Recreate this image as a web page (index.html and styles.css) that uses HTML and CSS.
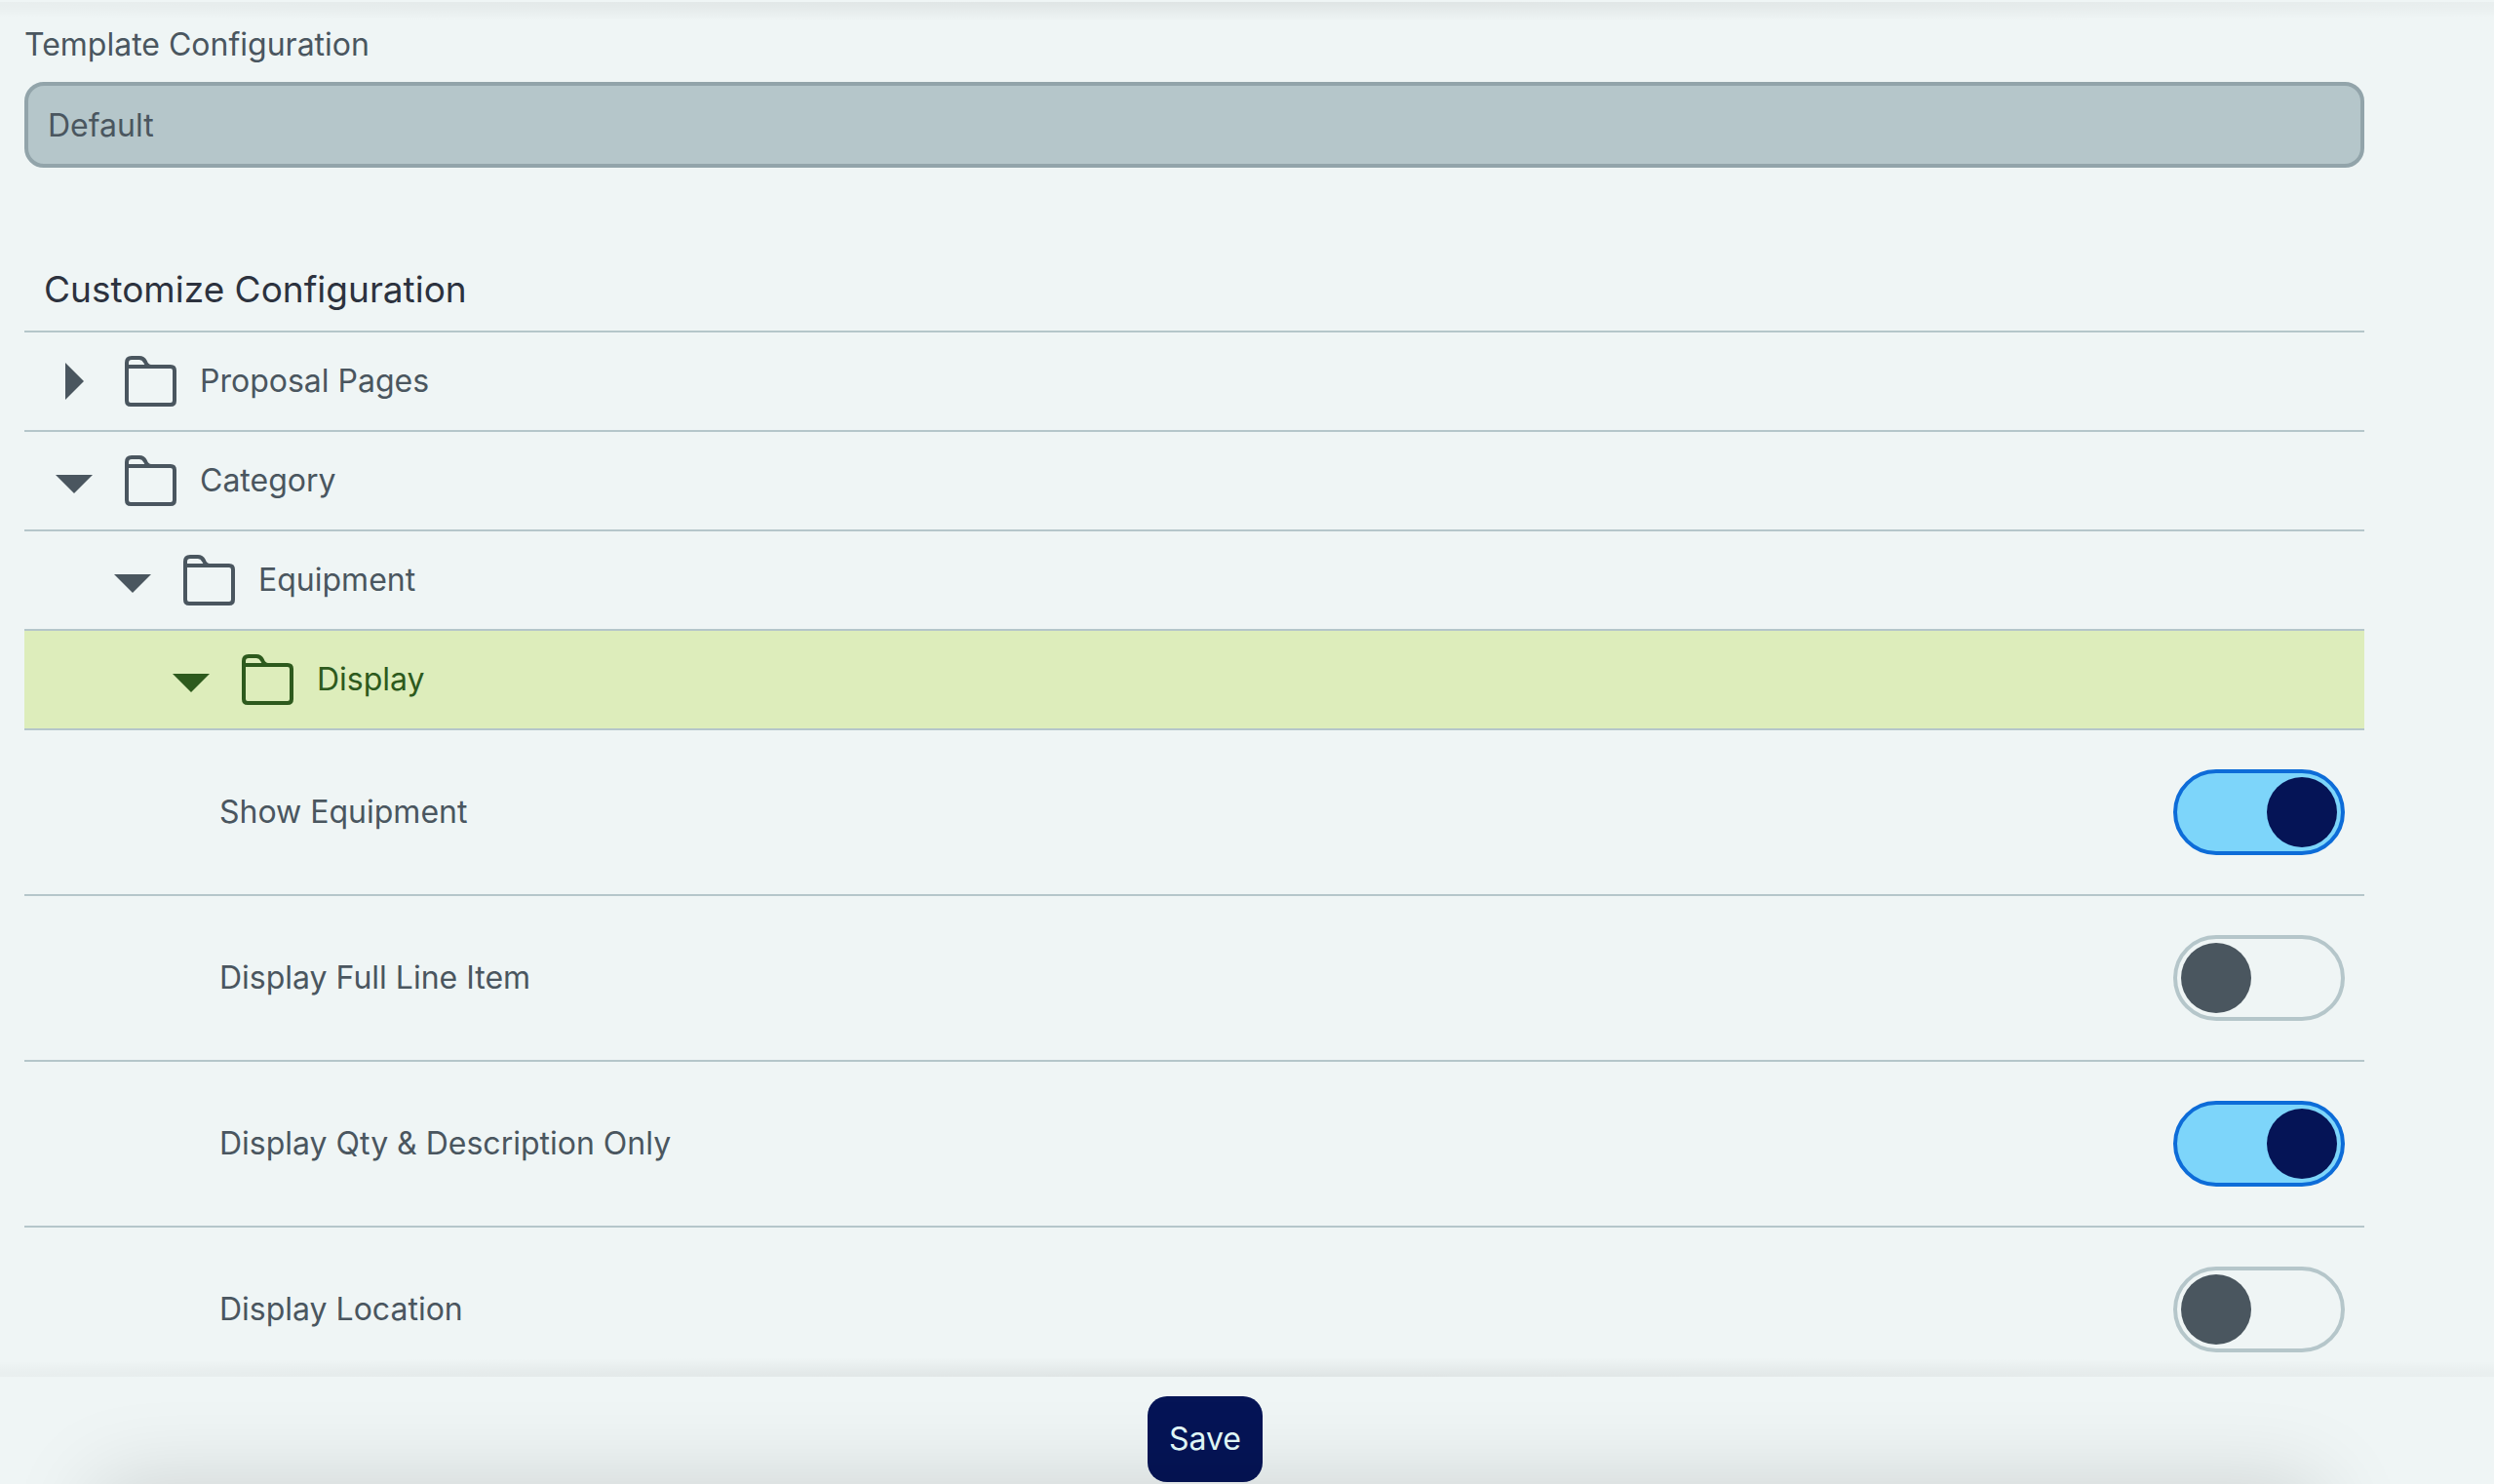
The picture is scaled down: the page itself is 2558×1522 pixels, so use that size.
FILE: index.html
```html
<!DOCTYPE html>
<html lang="en">
<head>
    <meta charset="UTF-8">
    <meta name="viewport" content="width=device-width, initial-scale=1.0">
    <title>Template Configuration</title>
    <link rel="stylesheet" href="styles.css">
</head>
<body>
<svg class="sprite" aria-hidden="true">
    <symbol id="folder" viewBox="0 0 54 54">
        <path d="M3 12V8Q3 3 8 3H16Q20 3 22 7Q24 12 28 12H48Q52 12 52 16V47Q52 51 48 51H7Q3 51 3 47V12H28"/>
    </symbol>
</svg>
<form class="page" id="configForm">
    <main class="content">
        <div class="form-group">
            <label for="template">Template Configuration</label>
            <input class="field" type="text" id="template" name="template" value="Default" disabled>
        </div>
        <h2>Customize Configuration</h2>
        <div class="tree">
            <button class="node" type="button" aria-expanded="false">
                <span class="arrow"></span>
                <svg class="folder"><use href="#folder"/></svg>
                <span>Proposal Pages</span>
            </button>
            <button class="node" type="button" aria-expanded="true">
                <span class="arrow open"></span>
                <svg class="folder"><use href="#folder"/></svg>
                <span>Category</span>
            </button>
            <button class="node level-2" type="button" aria-expanded="true">
                <span class="arrow open"></span>
                <svg class="folder"><use href="#folder"/></svg>
                <span>Equipment</span>
            </button>
            <button class="node level-3 selected" type="button" aria-expanded="true">
                <span class="arrow open"></span>
                <svg class="folder"><use href="#folder"/></svg>
                <span>Display</span>
            </button>
            <div class="option">
                <label for="showEquipment">Show Equipment</label>
                <input class="toggle" type="checkbox" id="showEquipment" checked>
            </div>
            <div class="option">
                <label for="fullLine">Display Full Line Item</label>
                <input class="toggle" type="checkbox" id="fullLine">
            </div>
            <div class="option">
                <label for="qtyOnly">Display Qty &amp; Description Only</label>
                <input class="toggle" type="checkbox" id="qtyOnly" checked>
            </div>
            <div class="option">
                <label for="location">Display Location</label>
                <input class="toggle" type="checkbox" id="location">
            </div>
        </div>
    </main>
    <footer class="footer">
        <button class="submit-btn" type="submit">Save</button>
    </footer>
</form>
</body>
</html>
```
FILE: styles.css
```css
* { box-sizing:border-box; }
body { font-family: Inter, "Liberation Sans", sans-serif; font-size:32px; line-height:40px; color:#4a565f; background:#eff5f5; margin:0; }
button, input { font:inherit; color:inherit; margin:0; }
.sprite { display:none; }
.page { height:100vh; display:flex; flex-direction:column; border-top:2px solid #eff5f5; overflow:hidden; }

.content { flex:1; min-height:0; overflow:hidden; padding:24px 133px 0 25px;
    background:
        radial-gradient(farthest-side at 50% 0, rgba(0,0,0,0.07), rgba(0,0,0,0)) top / 160% 20px no-repeat,
        radial-gradient(farthest-side at 50% 100%, rgba(0,0,0,0.07), rgba(0,0,0,0)) bottom / 160% 20px no-repeat; }
.form-group { display:flex; flex-direction:column; gap:18px; margin-bottom:100px; }
.field { width:100%; height:88px; padding:0 20px; border:4px solid #92a4aa; border-radius:20px; background:#b5c6ca; }
h2 { margin:0; padding:0 20px 17px; font-size:37px; line-height:50px; font-weight:400; color:#2c323e; }

.node { display:flex; align-items:center; gap:20px; width:100%; height:102px; padding:0 20px; border:0; border-top:2px solid #b5c6ca; background:none; text-align:left; cursor:pointer; }
.level-2 { padding-left:80px; }
.level-3 { padding-left:140px; }
.selected { background:#ddedbb; color:#2d5a1d; }
.arrow { width:62px; display:flex; justify-content:center; }
.arrow::before { content:""; border-left:19px solid currentColor; border-top:19px solid transparent; border-bottom:19px solid transparent; }
.arrow.open { padding-top:6px; }
.arrow.open::before { border-top:19px solid currentColor; border-left:19px solid transparent; border-right:19px solid transparent; border-bottom:0; }
.folder { width:54px; height:54px; margin-right:4px; fill:none; stroke:currentColor; stroke-width:4; }

.option { display:flex; align-items:center; justify-content:space-between; height:170px; padding:0 20px 0 200px; border-top:2px solid #b5c6ca; }
.toggle { appearance:none; display:flex; width:176px; height:88px; padding:4px; border:4px solid #b5c6ca; border-radius:44px; cursor:pointer; }
.toggle::before { content:""; width:72px; height:72px; border-radius:50%; background:#4a565f; }
.toggle:checked { justify-content:flex-end; background:#7dd5fa; border-color:#0d6cd8; }
.toggle:checked::before { background:#051456; }

.footer { position:relative; display:flex; justify-content:center; padding:20px 86px 2px 0; }
/* shadow rising from below the window edge */
.footer::after { content:""; position:absolute; top:100%; left:100px; right:180px; height:200px; box-shadow:0 0 90px rgba(0,0,0,0.15); pointer-events:none; }
.submit-btn { height:88px; padding:0 22px; border:0; border-radius:20px; background:#051456; color:#e4fbfb; cursor:pointer; }
```
